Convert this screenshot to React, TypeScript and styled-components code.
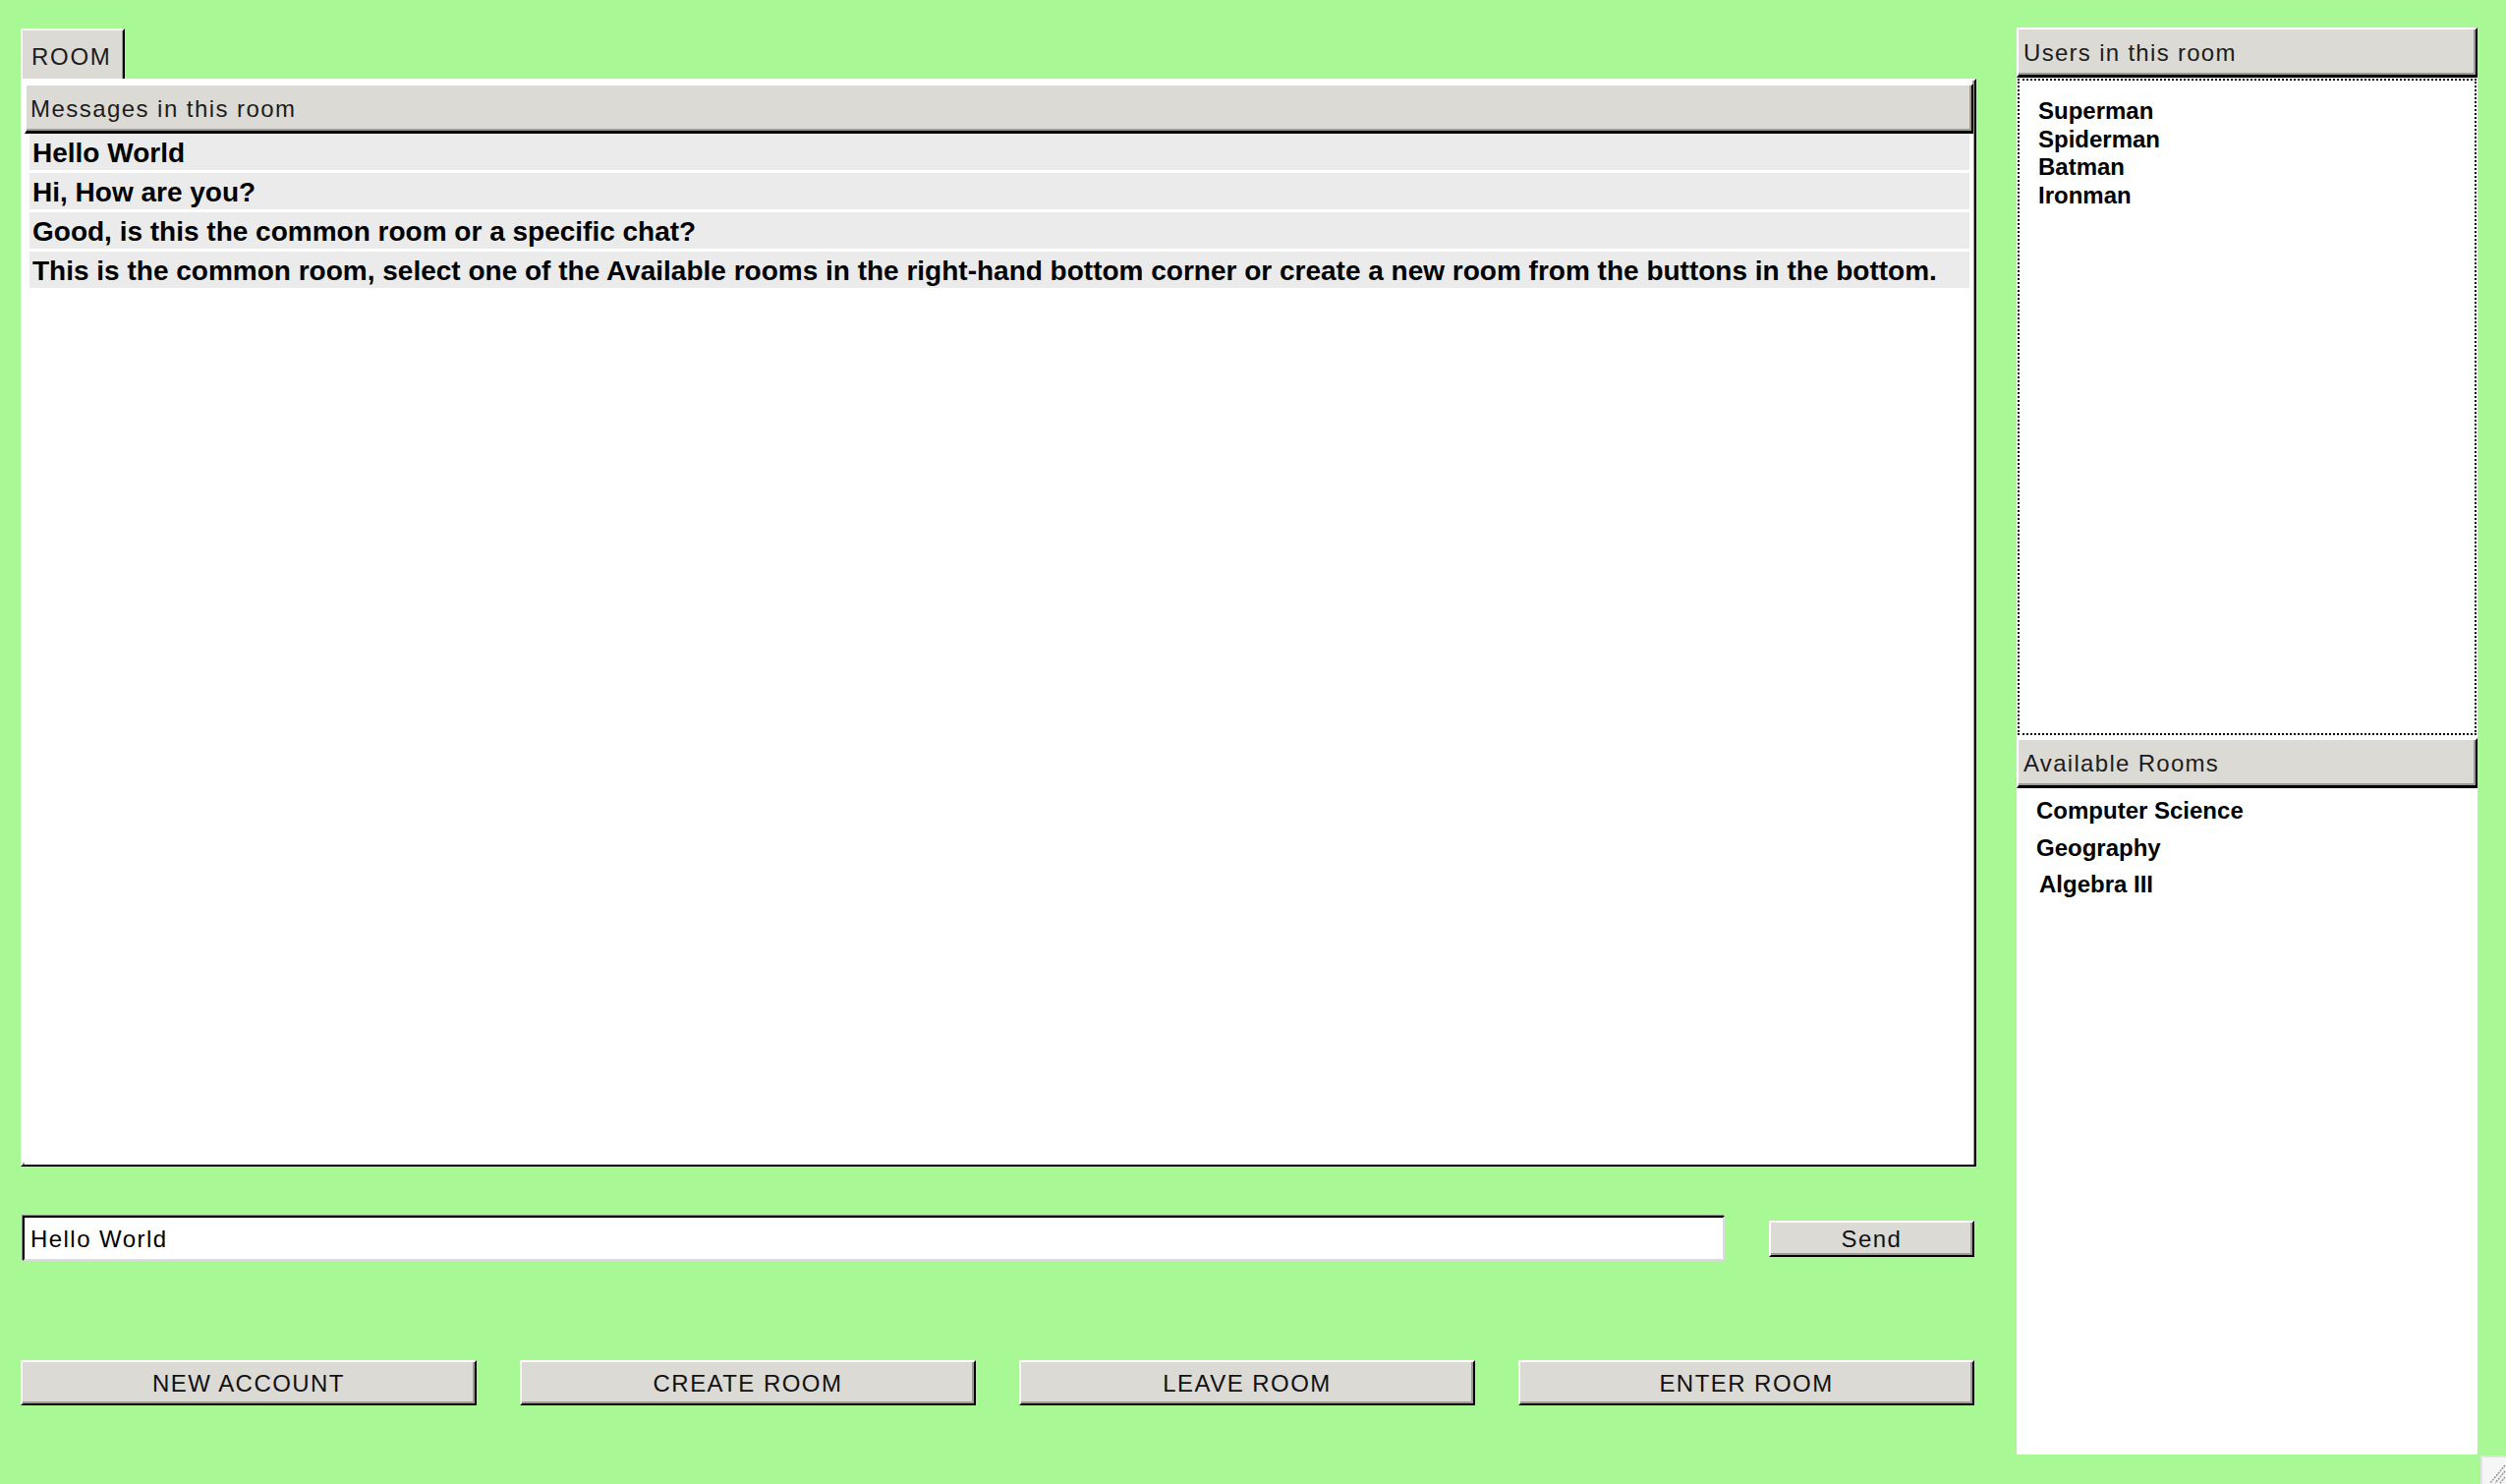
import React from "react";
import styled, { createGlobalStyle } from "styled-components";

const GlobalStyle = createGlobalStyle`
  html, body {
    margin: 0;
    padding: 0;
    background: #a8f895;
    overflow: hidden;
  }
  #root {
    width: 2550px;
    height: 1510px;
  }
`;

const Window = styled.div`
  position: relative;
  display: flex;
  width: 2550px;
  height: 1510px;
  background: #a8f895;
  font-family: "Liberation Sans", Arial, sans-serif;
  font-size: 24px;
  letter-spacing: 1.45px;
  color: #1c1c1c;
  box-sizing: border-box;
`;

const LeftColumn = styled.div`
  display: flex;
  flex-direction: column;
  width: 1990px;
  margin-left: 21px;
  padding-top: 29px;
`;

const TabBar = styled.div`
  display: flex;
  height: 51px;
`;

const Tab = styled.div`
  box-sizing: border-box;
  width: 106px;
  height: 51px;
  padding: 15px 0 0 9px;
  background: #dcdad5;
  border-top: 2px solid #ffffff;
  border-left: 2px solid #ffffff;
  border-right: 2px solid #000000;
  box-shadow: inset -1px 0 0 #9e9b94;
  line-height: 24px;
  letter-spacing: 1.7px;
`;

const Page = styled.div`
  box-sizing: border-box;
  height: 1107px;
  display: flex;
  flex-direction: column;
  padding: 3px 1px 0 2px;
  background: #ffffff;
  border-top: 2px solid #ffffff;
  border-left: 2px solid #ffffff;
  border-right: 2px solid #000000;
  border-bottom: 2px solid #000000;
  box-shadow: inset -2px -2px 0 #9e9b94;
`;

const PanelHeader = styled.div`
  box-sizing: border-box;
  flex: none;
  height: 51px;
  display: flex;
  align-items: center;
  padding: 2px 0 0 4px;
  background: #dcdad5;
  border-top: 2px solid #ffffff;
  border-left: 2px solid #ffffff;
  border-right: 2px solid #000000;
  border-bottom: 3px solid #000000;
  box-shadow: inset -2px -2px 0 #9e9b94;
  white-space: nowrap;
`;

const MessageList = styled.div`
  flex: 1;
  display: flex;
  flex-direction: column;
  gap: 3px;
  padding: 0 4px 0 5px;
  background: #ffffff;
`;

const MessageRow = styled.div`
  height: 37px;
  line-height: 39px;
  padding-left: 3px;
  background: #ebebeb;
  font-weight: bold;
  font-size: 28px;
  letter-spacing: 0;
  color: #000000;
  white-space: nowrap;
  overflow: hidden;
`;

const InputRow = styled.div`
  display: flex;
  align-items: center;
  height: 46px;
  margin-top: 50px;
`;

const TextField = styled.div`
  box-sizing: border-box;
  width: 1732px;
  height: 46px;
  margin-left: 2px;
  padding: 2px 0 0 6px;
  display: flex;
  align-items: center;
  background: #ffffff;
  border-top: 2px solid #000000;
  border-left: 2px solid #000000;
  border-right: 2px solid #dcdcdc;
  border-bottom: 2px solid #dcdcdc;
  box-shadow: -1px -1px 0 #8a8a8a;
  color: #000000;
`;

const Button = styled.div<{ $w?: number; $h: number }>`
  box-sizing: border-box;
  ${(p) => (p.$w ? `width: ${p.$w}px;` : "")}
  height: ${(p) => p.$h}px;
  display: flex;
  align-items: center;
  justify-content: center;
  padding-top: 2px;
  background: #dcdad5;
  border-top: 2px solid #ffffff;
  border-left: 2px solid #ffffff;
  border-right: 2px solid #000000;
  border-bottom: 2px solid #000000;
  box-shadow: inset -2px -2px 0 #9e9b94;
  color: #111111;
  white-space: nowrap;
`;

const SendButton = styled(Button)`
  margin-left: auto;
  margin-right: 2px;
`;

const ButtonRow = styled.div`
  display: grid;
  grid-template-columns: repeat(4, 464px);
  column-gap: 44px;
  margin-top: 101px;
`;

const RightColumn = styled.div`
  display: flex;
  flex-direction: column;
  width: 469px;
  margin-left: 41px;
  padding-top: 28px;
  height: 1452px;
`;

const SideHeader = styled(PanelHeader)`
  padding-left: 5px;
  letter-spacing: 1.3px;
`;

const UsersBox = styled.div`
  flex: none;
  height: 672px;
  box-sizing: border-box;
  padding: 1px 1px 3px 1px;
  background: #ffffff;
`;

const UsersList = styled.div`
  box-sizing: border-box;
  height: 100%;
  border: 2px dotted #000000;
  padding: 17px 0 0 19px;
`;

const NameItem = styled.div<{ $indent?: number; $lh: number }>`
  font-weight: bold;
  letter-spacing: 0;
  line-height: ${(p) => p.$lh}px;
  padding-left: ${(p) => p.$indent ?? 0}px;
  color: #000000;
  white-space: nowrap;
`;

const RoomsList = styled.div`
  flex: 1;
  background: #ffffff;
  padding: 4px 0 0 20px;
`;

const Grip = styled.div`
  position: absolute;
  right: 0;
  bottom: 0;
  width: 26px;
  height: 29px;
  box-sizing: border-box;
  background: #f6f6f6;
  border-top: 2px solid #e2e2e2;
  border-left: 2px solid #e2e2e2;
`;

const messages = [
  "Hello World",
  "Hi, How are you?",
  "Good, is this the common room or a specific chat?",
  "This is the common room, select one of the Available rooms in the right-hand bottom corner or create a new room from the buttons in the bottom.",
];

const users = ["Superman", "Spiderman", "Batman", "Ironman"];
const rooms: { name: string; indent?: number }[] = [
  { name: "Computer Science" },
  { name: "Geography" },
  { name: "Algebra III", indent: 3 },
];
const actions = ["NEW ACCOUNT", "CREATE ROOM", "LEAVE ROOM", "ENTER ROOM"];

export default function App() {
  return (
    <>
      <GlobalStyle />
      <Window>
        <LeftColumn>
          <TabBar>
            <Tab>ROOM</Tab>
          </TabBar>
          <Page>
            <PanelHeader>Messages in this room</PanelHeader>
            <MessageList>
              {messages.map((m) => (
                <MessageRow key={m}>{m}</MessageRow>
              ))}
            </MessageList>
          </Page>
          <InputRow>
            <TextField>Hello World</TextField>
            <SendButton $w={209} $h={37}>
              Send
            </SendButton>
          </InputRow>
          <ButtonRow>
            {actions.map((a) => (
              <Button key={a} $h={46}>
                {a}
              </Button>
            ))}
          </ButtonRow>
        </LeftColumn>
        <RightColumn>
          <SideHeader>Users in this room</SideHeader>
          <UsersBox>
            <UsersList>
              {users.map((u) => (
                <NameItem key={u} $lh={28.5}>
                  {u}
                </NameItem>
              ))}
            </UsersList>
          </UsersBox>
          <SideHeader>Available Rooms</SideHeader>
          <RoomsList>
            {rooms.map((r) => (
              <NameItem key={r.name} $lh={37.5} $indent={r.indent}>
                {r.name}
              </NameItem>
            ))}
          </RoomsList>
        </RightColumn>
        <Grip>
          <svg width="24" height="27" viewBox="0 0 24 27">
            <g stroke="#8f8f8f" strokeWidth="1.4" strokeDasharray="2 1">
              <line x1="23" y1="8" x2="8" y2="26" />
              <line x1="23" y1="14" x2="13" y2="26" />
              <line x1="23" y1="20" x2="18" y2="26" />
            </g>
          </svg>
        </Grip>
      </Window>
    </>
  );
}
